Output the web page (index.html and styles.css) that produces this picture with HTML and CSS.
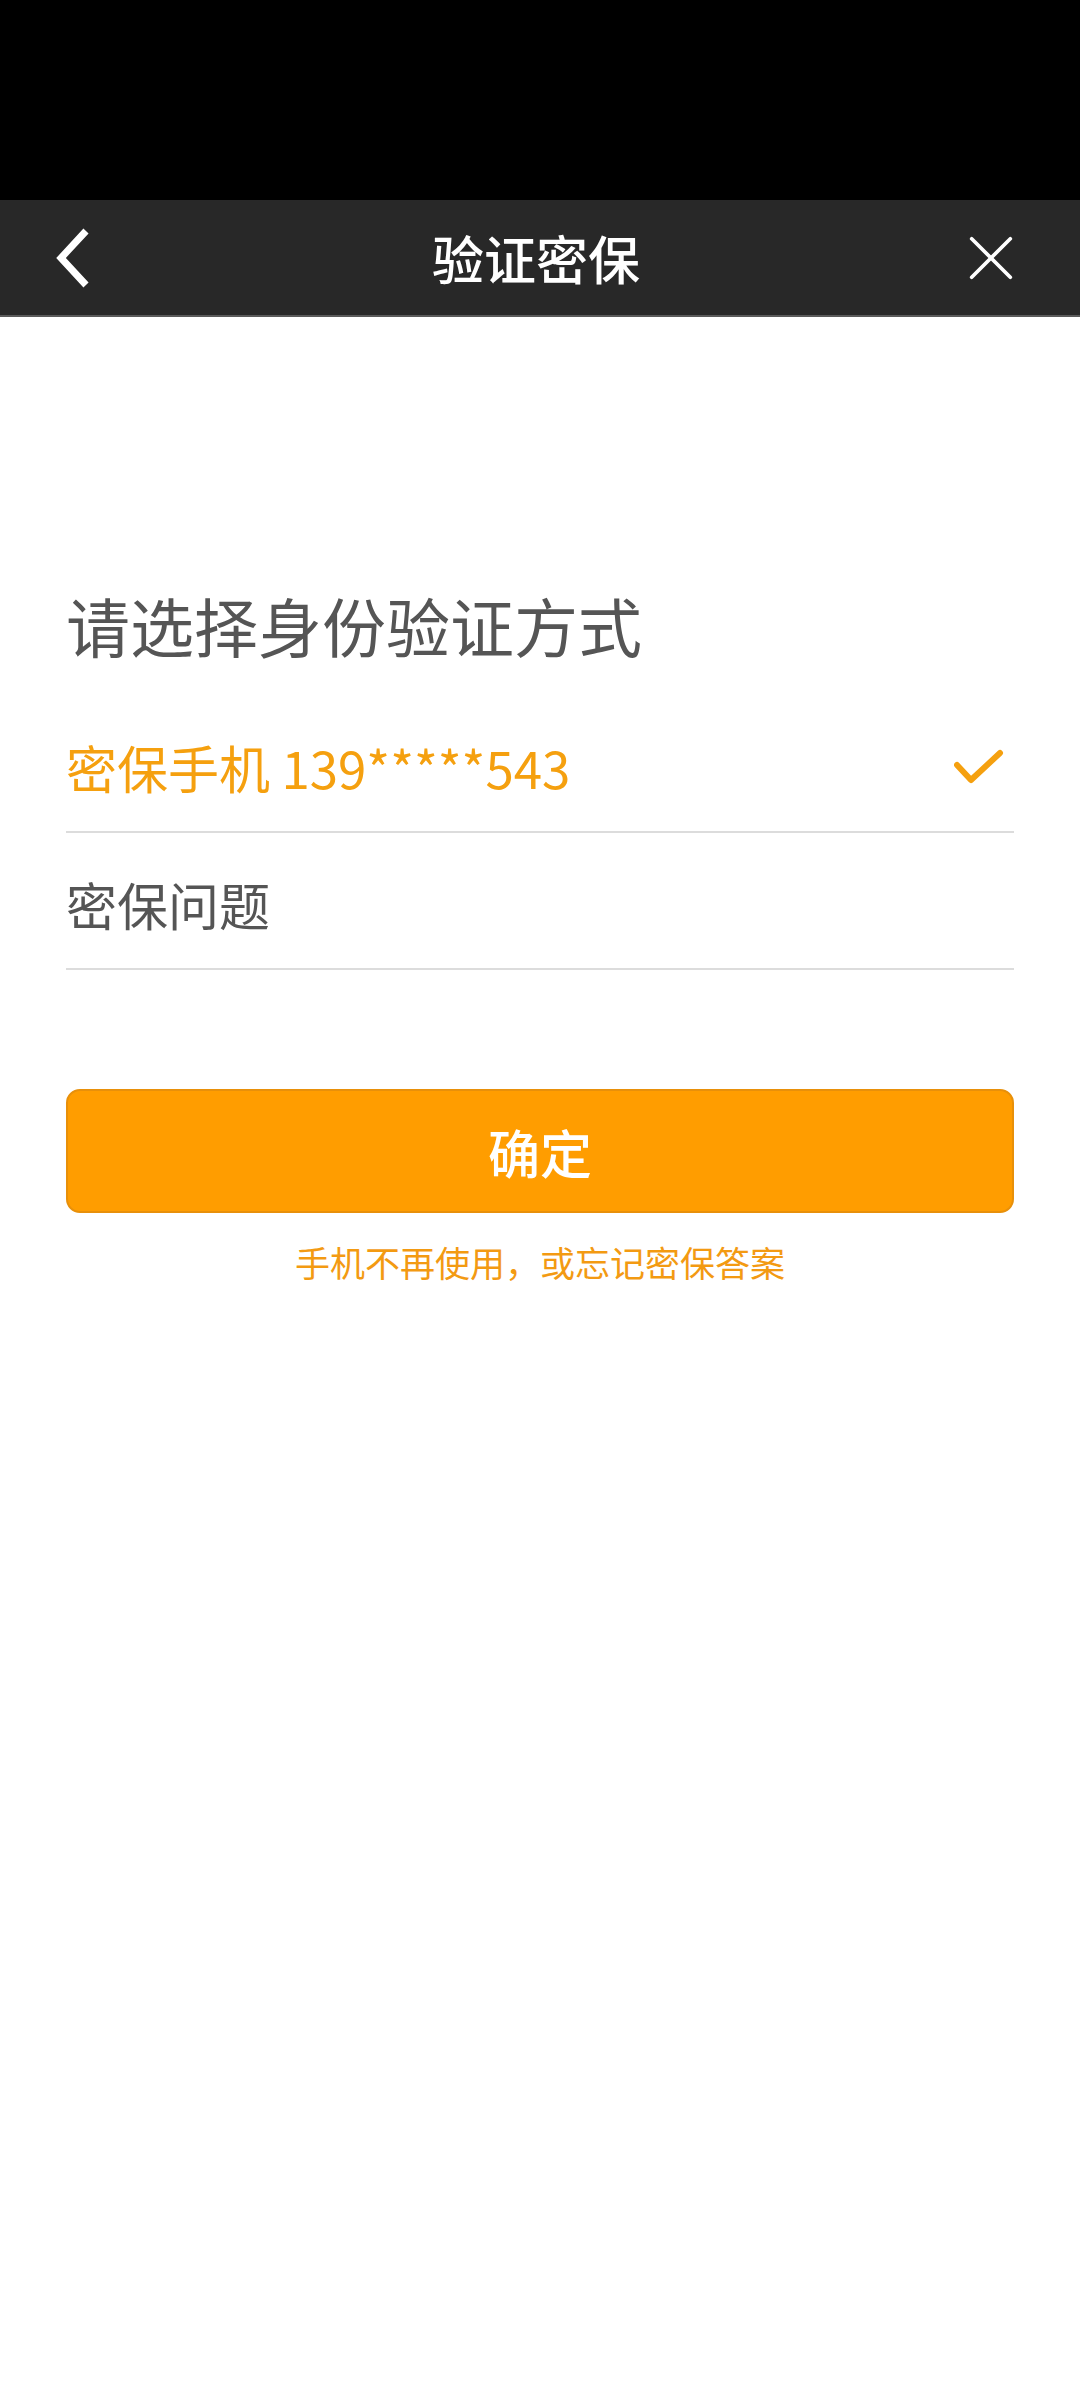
FILE: index.html
```html
<!DOCTYPE html>
<html lang="zh-CN">
<head>
<meta charset="utf-8">
<title>验证密保</title>
<link rel="stylesheet" href="styles.css">
</head>
<body>
<div class="statusbar"></div>
<header class="header">
  <div class="hbtn back">
    <svg width="50" height="70" viewBox="0 0 50 70"><polyline points="30,8 5,35 30,62" fill="none" stroke="#fff" stroke-width="7" stroke-linejoin="miter" stroke-linecap="butt"/></svg>
  </div>
  <div class="title">验证密保</div>
  <div class="hbtn close">
    <svg width="50" height="50" viewBox="0 0 50 50"><path d="M4 4 L46 46 M46 4 L4 46" stroke="#fff" stroke-width="4" stroke-linecap="round"/></svg>
  </div>
</header>
<main class="content">
  <h1 class="heading">请选择身份验证方式</h1>
  <div class="option selected">
    <span>密保手机 139*****543</span>
    <svg class="check" width="50" height="36" viewBox="0 0 50 36"><polyline points="3,16 17,31 46,4" fill="none" stroke="#f5a00f" stroke-width="6" stroke-linecap="round" stroke-linejoin="round"/></svg>
  </div>
  <div class="option">
    <span>密保问题</span>
  </div>
  <button class="confirm">确定</button>
  <p class="hint">手机不再使用，或忘记密保答案</p>
</main>
</body>
</html>
```
FILE: styles.css
```css
* { box-sizing: border-box; }
html, body { margin: 0; padding: 0; background: #fff; }
body {
  width: 1080px;
  font-family: "Noto Sans CJK SC", "Noto Sans", sans-serif;
}
.statusbar { height: 200px; background: #000; }
.header {
  height: 117px;
  background: #282828;
  border-bottom: 2px solid #5a5a5a;
  display: flex;
  align-items: center;
  justify-content: space-between;
  padding: 0 64px 0 56px;
}
.hbtn { width: 50px; display: flex; align-items: center; justify-content: center; }
.back { justify-content: flex-start; }
.close svg { width: 46px; height: 46px; }
.title {
  color: #fff;
  font-size: 52px;
  font-weight: 500;
  line-height: 1;
}
.content { padding: 0 66px; }
.heading {
  margin: 259px 0 24px;
  font-size: 64px;
  line-height: 96px;
  font-weight: 400;
  color: #555;
}
.option {
  height: 137px;
  padding-top: 6px;
  border-bottom: 2px solid #dcdcdc;
  display: flex;
  align-items: center;
  justify-content: space-between;
  font-size: 51px;
  color: #555;
}
.option.selected { color: #f5a00f; }
.check { margin-right: 10px; }
.confirm {
  display: block;
  width: 100%;
  height: 124px;
  margin-top: 119px;
  border: 2px solid #e8900a;
  border-radius: 14px;
  background: #ff9d00;
  color: #fff;
  font-family: inherit;
  font-size: 52px;
  font-weight: 500;
  padding: 0;
}
.hint {
  margin: 24px 0 0;
  text-align: center;
  font-size: 35px;
  line-height: 50px;
  color: #f39a12;
}
```
